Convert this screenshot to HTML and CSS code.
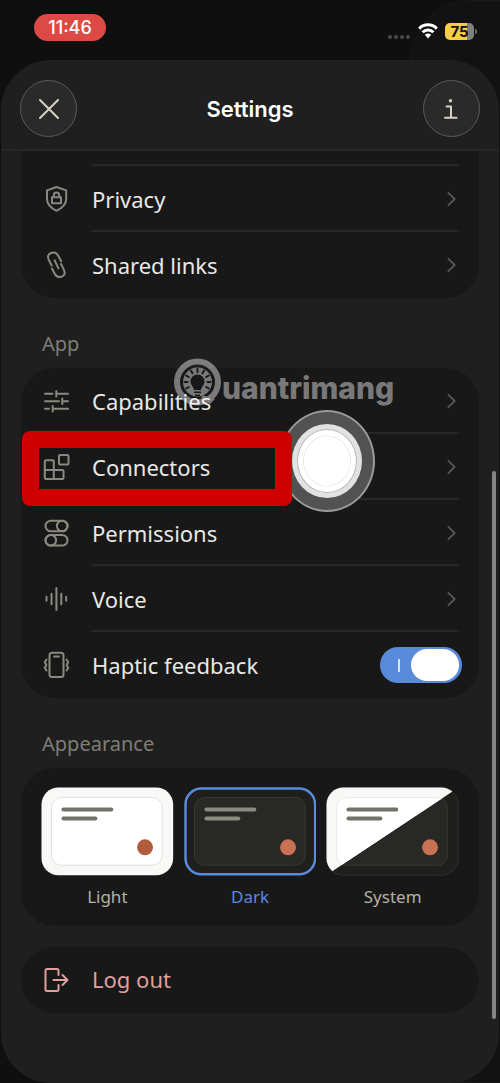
FILE: index.html
```html
<!DOCTYPE html>
<html lang="en">
<head>
<meta charset="utf-8">
<meta name="viewport" content="width=device-width, initial-scale=1">
<title>Settings</title>
<link rel="stylesheet" href="styles.css">
</head>
<body>
<svg class="defs" aria-hidden="true">
  <symbol id="chevron" viewBox="0 0 10 18"><path d="M1.500 2 8.500 9l-7 7"/></symbol>
</svg>
<div class="screen">
  <div class="backdrop"></div>
  <div class="status">
    <span class="time">11:46</span>
    <div class="indicators">
      <svg class="dots" viewBox="0 0 24 6"><circle cx="3" cy="3" r="2"/><circle cx="9" cy="3" r="2"/><circle cx="15" cy="3" r="2"/><circle cx="21" cy="3" r="2"/></svg>
      <svg class="wifi" viewBox="0 0 20 16"><path d="M1.200 5.600C6 .6 14 .6 18.800 5.600M4.600 9.200c3-3.100 7.800-3.100 10.800 0"/><path class="solid" d="M6.800 11.700c1.800-1.700 4.600-1.700 6.400 0L10 15.500z"/></svg>
      <span class="battery">75</span>
    </div>
  </div>

  <main class="sheet">
    <header class="header">
      <button class="round" type="button" aria-label="Close"><svg viewBox="0 0 20 20"><path d="M1 1l18 18M19 1 1 19"/></svg></button>
      <h1 class="title">Settings</h1>
      <button class="round" type="button" aria-label="Information"><svg viewBox="0 0 20 20"><circle class="dot" cx="9.500" cy="1.800" r="1.700"/><path d="M5.500 7.500H10V18.500M4 18.700h11.500"/></svg></button>
    </header>

    <div class="content">
      <section class="card card-cut">
        <div class="row-rest"></div>
        <button class="row" type="button">
          <svg class="icon" viewBox="0 0 30 30"><path d="M15.500 3 25.200 6.400V15c0 6-4.400 9.200-9.700 11.800C10.200 24.200 6 21 6 15V6.400zM11 13.200h9v6h-9zM12.800 13v-1.800a2.700 2.700 0 0 1 5.400 0V13"/></svg>
          <span class="row-body"><span>Privacy</span><svg class="chev"><use href="#chevron"/></svg></span>
        </button>
        <button class="row" type="button">
          <svg class="icon" viewBox="0 0 30 30"><path d="M10.700 15.500 8.300 11C6 6.500 7 4.200 10 3c3.400-1.300 5.800-.2 7.500 3.300l2.600 5M20 14l2.400 4.600c2.200 4.500 1.400 6.800-1.600 8-3.300 1.200-5.700.2-7.400-3.300L11 18.500M13.700 10.300l3.700 8"/></svg>
          <span class="row-body"><span>Shared links</span><svg class="chev"><use href="#chevron"/></svg></span>
        </button>
      </section>

      <h2 class="label">App</h2>
      <section class="card">
        <button class="row" type="button">
          <svg class="icon" viewBox="0 0 30 30"><path d="M4 7.700h7.500M15.300 5v5.500M15.300 7.700H27M4 15.300h14M21.300 12.600v5.400M21.300 15.300H27M4 22.700h4M11.700 20v5.500M11.700 22.700H27"/></svg>
          <span class="row-body"><span>Capabilities</span><svg class="chev"><use href="#chevron"/></svg></span>
        </button>
        <button class="row" type="button">
          <svg class="icon" viewBox="0 0 30 30"><path d="M4.800 8.300h7a1 1 0 0 1 1 1V18h8.700a1 1 0 0 1 1 1v7a1 1 0 0 1-1 1H4.800a1 1 0 0 1-1-1V9.300a1 1 0 0 1 1-1zM3.800 18h9v9"/><rect x="18" y="3" width="9.500" height="9.500" rx="1"/></svg>
          <span class="row-body"><span>Connectors</span><svg class="chev"><use href="#chevron"/></svg></span>
        </button>
        <button class="row" type="button">
          <svg class="icon" viewBox="0 0 30 30"><rect x="4.500" y="2.700" width="22" height="10.600" rx="5.300"/><circle cx="21.200" cy="8" r="5.300"/><rect x="4.500" y="17" width="22" height="10.600" rx="5.300"/><circle cx="9.800" cy="22.300" r="5.300"/></svg>
          <span class="row-body"><span>Permissions</span><svg class="chev"><use href="#chevron"/></svg></span>
        </button>
        <button class="row" type="button">
          <svg class="icon" viewBox="0 0 30 30"><path d="M5.500 12.800v4M10.500 9.800v10.500M15.400 4v22M20.300 9.800v10.500M25.200 12.800v4"/></svg>
          <span class="row-body"><span>Voice</span><svg class="chev"><use href="#chevron"/></svg></span>
        </button>
        <div class="row row-switch">
          <svg class="icon" viewBox="0 0 30 30"><rect x="8.500" y="2.800" width="14" height="24.200" rx="2.500"/><path d="M13 6.500h5M5.500 9.500 3.800 12l1.500 3-1.500 3 1.700 2.500M25.500 9.500l1.700 2.500-1.500 3 1.500 3-1.700 2.500"/></svg>
          <span class="row-body"><label for="haptic">Haptic feedback</label><input class="switch" id="haptic" type="checkbox" role="switch" checked></span>
        </div>

        <div class="touch"></div>
        <div class="highlight"></div>
        <div class="watermark">
          <svg viewBox="0 0 48 48"><circle class="ring" cx="23.500" cy="24" r="20.500"/><circle class="disc" cx="23.500" cy="24" r="14.500"/><path class="tail" d="M28 37l13 4-5 5-9-4z"/><g class="rays"><path d="M23.500 11v3M17 12.700l1.500 2.600M30 12.700l-1.500 2.600M12.200 17.500l2.600 1.500M34.800 17.500 32.200 19M10.500 24h3M36.500 24h-3M12.200 30.500l2.600-1.500M34.800 30.500 32.200 29"/></g><path class="bulb" d="M23.500 16.500a7 7 0 0 1 7 7c0 3.500-3 5-3.500 8.500h-7c-.5-3.500-3.500-5-3.500-8.500a7 7 0 0 1 7-7zM20 33.500h7V35h-7zM21 36.500h5V38h-5z"/></svg>
          <span>uantrimang</span>
        </div>
      </section>

      <h2 class="label">Appearance</h2>
      <section class="card themes">
        <label class="theme">
          <input type="radio" name="theme">
          <svg viewBox="0 0 133 89"><rect x=".5" y=".5" width="132" height="88" rx="17" fill="#f8f8f6"/><rect x="10.500" y="10.500" width="111" height="68" rx="10" fill="#fff" stroke="#e0e0de"/><rect x="20.500" y="20.500" width="52" height="4" rx="2" fill="#73726b"/><rect x="20.500" y="29.500" width="36" height="4" rx="2" fill="#73726b"/><circle cx="104.300" cy="60.500" r="8" fill="#b05c3d"/></svg>
          <span>Light</span>
        </label>
        <label class="theme">
          <input type="radio" name="theme" checked>
          <svg viewBox="0 0 133 89"><rect x="1.500" y="1.500" width="130" height="86" rx="16" fill="#1f1f1e" stroke="#5a8ada" stroke-width="2.500"/><rect x="10.500" y="10.500" width="111" height="68" rx="10" fill="#282826" stroke="#383836"/><rect x="20.500" y="20.500" width="52" height="4" rx="2" fill="#8c8b82"/><rect x="20.500" y="29.500" width="36" height="4" rx="2" fill="#8c8b82"/><circle cx="104.300" cy="60.500" r="8" fill="#c97153"/></svg>
          <span>Dark</span>
        </label>
        <label class="theme">
          <input type="radio" name="theme">
          <svg viewBox="0 0 133 89"><clipPath id="half"><path d="M0 0H133L126 5 7 84 0 89z"/></clipPath><rect x=".5" y=".5" width="132" height="88" rx="17" fill="#1f1f1e" stroke="#30302e"/><rect x="10.500" y="10.500" width="111" height="68" rx="10" fill="#282826" stroke="#383836"/><g clip-path="url(#half)"><rect x=".5" y=".5" width="132" height="88" rx="17" fill="#f8f8f6"/><rect x="10.500" y="10.500" width="111" height="68" rx="10" fill="#fff" stroke="#e9e9e7"/></g><rect x="20.500" y="20.500" width="52" height="4" rx="2" fill="#73726b"/><rect x="20.500" y="29.500" width="36" height="4" rx="2" fill="#73726b"/><circle cx="104.300" cy="60.500" r="8" fill="#c97153"/></svg>
          <span>System</span>
        </label>
      </section>

      <section class="card card-logout">
        <button class="row row-logout" type="button">
          <svg class="icon" viewBox="0 0 30 30"><path d="M17.500 10V5.500a1.500 1.500 0 0 0-1.500-1.500H6a1.500 1.500 0 0 0-1.500 1.500v19A1.500 1.500 0 0 0 6 26h10a1.500 1.500 0 0 0 1.500-1.500V20M12.500 15h14M21.500 10l5 5-5 5"/></svg>
          <span class="row-body"><span>Log out</span></span>
        </button>
      </section>
    </div>
  </main>
  <div class="scrollbar"></div>
</div>
</body>
</html>
```
FILE: styles.css
```css
* { box-sizing: border-box; }

body {
  margin: 0;
  background: #0f0f0f;
  color: #e9e8e4;
  font-family: "Noto Sans", sans-serif;
  font-size: 22px;
}

button {
  border: 0;
  padding: 0;
  background: none;
  color: inherit;
  font: inherit;
  text-align: left;
}

h1, h2 { margin: 0; }

svg {
  display: block;
  fill: none;
  stroke: currentColor;
  stroke-linecap: round;
  stroke-linejoin: round;
}

.defs { position: absolute; width: 0; height: 0; }

.screen {
  position: relative;
  display: flex;
  flex-direction: column;
  min-height: 100vh;
}

.backdrop {
  position: absolute;
  top: 0;
  right: 0;
  width: 89px;
  height: 100%;
  border: 1px solid #191919;
  border-right: 0;
  border-radius: 60px 0 0 0;
  background: #121212;
}

.status {
  position: relative;
  display: flex;
  justify-content: space-between;
  align-items: flex-start;
  height: 60px;
  padding: 14px 26px 0 34px;
}

.time {
  width: 72px;
  border-radius: 14px;
  background: #dd4a45;
  color: #fff;
  font: 500 18px/27px Inter, sans-serif;
  text-align: center;
}

.indicators {
  display: flex;
  align-items: center;
  gap: 7px;
  padding-top: 8px;
}

.dots {
  width: 24px;
  height: 6px;
  margin-top: 12px;
  fill: #4a4a4a;
  stroke: none;
}

.wifi {
  width: 20px;
  height: 16px;
  color: #fff;
  stroke-width: 3;
  stroke-linecap: butt;
}

.wifi .solid { fill: #fff; stroke: none; }

.battery {
  position: relative;
  width: 29px;
  border-radius: 5px;
  background: linear-gradient(90deg, #f6cf46 76%, #7f7f7f 76%);
  color: #111;
  font: 700 15px/17px Inter, sans-serif;
  text-align: center;
}

.battery::after {
  content: "";
  position: absolute;
  top: 6px;
  right: -3px;
  width: 2px;
  height: 5px;
  border-radius: 0 2px 2px 0;
  background: #6b6b6b;
}

.sheet {
  position: relative;
  flex: 1;
  margin: 0 1px;
  border-radius: 50px;
  background: #1f1f1f;
}

.header {
  display: flex;
  justify-content: space-between;
  align-items: center;
  padding: 20px 19px 12px;
  border-bottom: 2px solid #272727;
}

.round {
  display: grid;
  place-items: center;
  width: 57px;
  height: 57px;
  border: 1px solid #5a5a5a;
  border-radius: 50%;
  background: #2a2a2a;
  color: #d5d2c3;
}

.round svg { width: 20px; height: 20px; stroke-width: 2; }
.round .dot { fill: currentColor; stroke: none; }

.title {
  color: #fff;
  font: 600 22px/28px Inter, sans-serif;
}

.content { padding: 0 20px; }

.card {
  position: relative;
  border-radius: 34px;
  background: #181818;
}

.card-cut { border-radius: 0 0 34px 34px; }

.row-rest {
  height: 15px;
  margin: 0 20px 0 71px;
  border-bottom: 2px solid #272727;
}

.row {
  display: flex;
  align-items: center;
  gap: 21px;
  width: 100%;
  height: 66px;
  padding: 0 20px;
}

.row-switch { padding-right: 17px; }

.icon {
  flex: none;
  width: 30px;
  height: 30px;
  color: #8a887f;
  stroke-width: 2;
}

.row-body {
  display: flex;
  flex: 1;
  justify-content: space-between;
  align-items: center;
  height: 66px;
  padding-top: 1px;
  border-bottom: 2px solid #272727;
}

.row:last-of-type .row-body,
.row-switch .row-body { border-bottom-color: transparent; }

.card:not(.card-cut) .row:nth-child(4) .row-body { border-bottom-color: #272727; }

.chev {
  width: 9px;
  height: 16px;
  margin-right: 3px;
  color: #575757;
  stroke-width: 2;
}

.switch {
  appearance: none;
  position: relative;
  width: 82px;
  height: 36px;
  margin: 0;
  border-radius: 18px;
  background: #5a8ada;
}

.switch::before {
  content: "";
  position: absolute;
  top: 12px;
  left: 18px;
  width: 2px;
  height: 13px;
  background: #d7e3f7;
}

.switch::after {
  content: "";
  position: absolute;
  top: 2px;
  right: 3px;
  width: 48px;
  height: 32px;
  border-radius: 16px;
  background: #fff;
}

.label {
  padding: 32px 21px 10px;
  color: #7f7d76;
  font-size: 20px;
  font-weight: 400;
  line-height: 28px;
}

.touch {
  position: absolute;
  top: 42px;
  left: 258px;
  width: 96px;
  height: 102px;
  border: 2px solid #9a9a9a;
  border-radius: 50%;
  background: #525252;
}

.touch::before,
.touch::after {
  content: "";
  position: absolute;
  border-radius: 50%;
  background: #fff;
}

.touch::before {
  inset: 12px 11px;
  border: 5px solid #e2e2e2;
}

.touch::after {
  inset: 17px 16px;
  border: 1px solid #b5b5b5;
  background: radial-gradient(closest-side, #fff 79%, #e2e2e2 81%, #fff 83%);
}

.highlight {
  position: absolute;
  top: 63px;
  left: 1px;
  width: 270px;
  height: 75px;
  border: 17px solid #cf0000;
  border-radius: 8px;
}

.watermark {
  position: absolute;
  top: -10px;
  left: 153px;
  display: flex;
  align-items: flex-start;
  color: #fff;
  font: 800 30px/48px Inter, sans-serif;
  opacity: 0.42;
}

.watermark svg { width: 48px; height: 48px; }
.watermark span { padding-top: 6px; }
.ring { stroke-width: 6; }
.disc, .tail { fill: currentColor; stroke: none; }
.rays { stroke: #181818; stroke-width: 2; }
.bulb { fill: #181818; stroke: none; }

.themes {
  display: grid;
  grid-template-columns: repeat(3, 1fr);
  gap: 10px;
  padding: 19px 20px 17px;
}

.theme {
  position: relative;
  display: flex;
  flex-direction: column;
  gap: 8px;
  color: #b3b1a6;
  font-size: 17px;
  line-height: 25px;
  text-align: center;
}

.theme input {
  position: absolute;
  opacity: 0;
}

.theme svg { width: 100%; stroke: none; }
.theme input:checked ~ span { color: #5a8ada; }

.card-logout { margin-top: 21px; }
.row-logout, .row-logout .icon { color: #dfa09b; }

.scrollbar {
  position: absolute;
  top: 471px;
  right: 4px;
  bottom: 64px;
  width: 4px;
  border-radius: 2px;
  background: #858585;
}
```
